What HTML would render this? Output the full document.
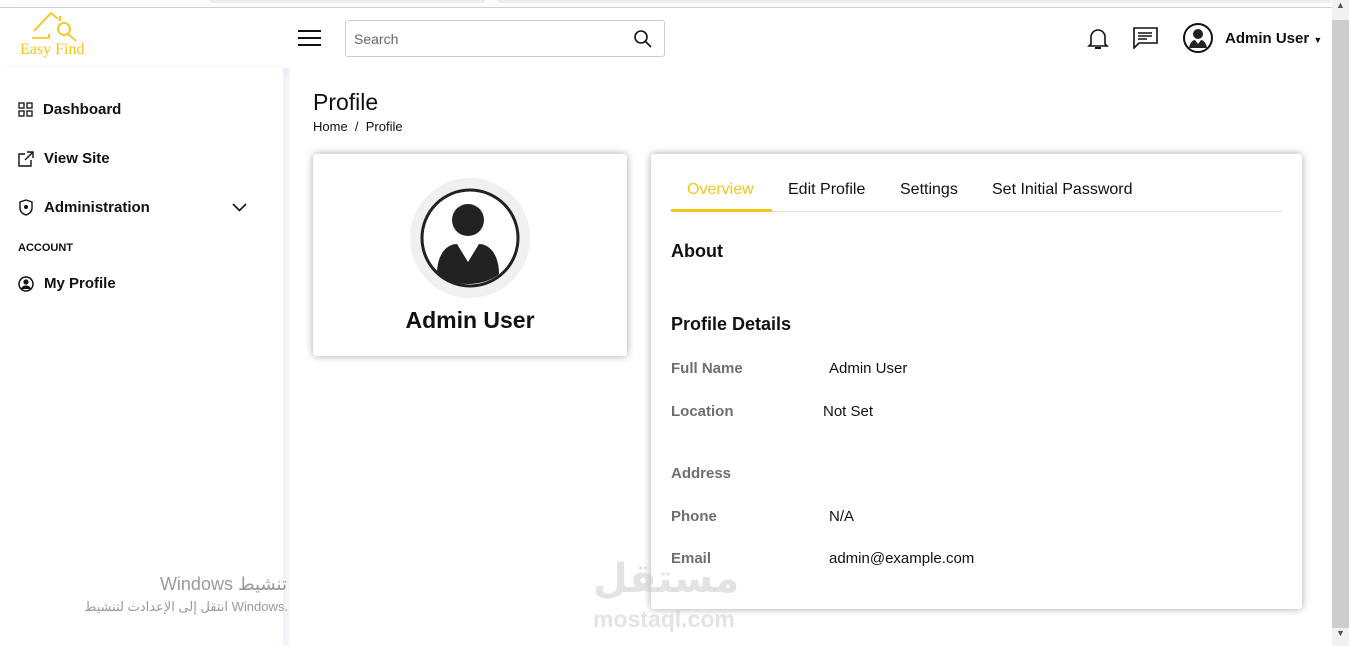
<!DOCTYPE html>
<html><head><meta charset="utf-8"><style>
*{box-sizing:border-box;margin:0;padding:0}
body{width:1349px;height:646px;overflow:hidden;background:#f6f9ff;font-family:"Liberation Sans","DejaVu Sans",sans-serif;color:#111;position:relative}
.top{position:absolute;left:0;top:0;width:1332px;height:8px;background:#fff;border-bottom:1px solid #d6d6d6}
.top i{position:absolute;top:0;height:3px;background:#eee;border-radius:0 0 4px 4px}
header{position:absolute;left:0;top:8px;width:1332px;height:60px;background:#fff;box-shadow:0 2px 12px rgba(0,0,0,.06)}
.side{position:absolute;left:0;top:68px;width:283px;height:578px;background:#fff;box-shadow:2px 0 8px rgba(0,0,0,.05)}
.main{position:absolute;left:290px;top:68px;width:1042px;height:578px;background:#fff}
.nav{position:absolute;left:18px;font-size:15px;font-weight:bold;color:#111;display:flex;align-items:center;gap:10px}
.card{position:absolute;background:#fff;box-shadow:0 0 8px rgba(0,0,0,.35);border-radius:3px}
.lbl{position:absolute;left:20px;font-size:15px;color:#555;font-weight:bold;opacity:.85}
.val{position:absolute;font-size:15px;color:#111}
.sb{position:absolute;right:0;top:0;width:17px;height:646px;background:#cdcdcd}
</style></head><body>
<div class="top"><i style="left:210px;width:275px"></i><i style="left:498px;width:834px"></i></div>
<header>
<svg style="position:absolute;left:18px;top:2px" width="72" height="40" viewBox="0 0 72 40"><g stroke="#f5c518" stroke-width="1.8" fill="none"><path d="M16 21 L33 3 L40 9"/><path d="M42 6 V11"/><path d="M31 24 V28 M31 28 H14"/><circle cx="46" cy="19" r="6"/><path d="M50 24 L58 31"/></g></svg>
<div style="position:absolute;left:20px;top:33px;font-family:'Liberation Serif',serif;font-size:16px;color:#f5c518">Easy Find</div>
<svg style="position:absolute;left:298px;top:21px" width="23" height="18"><path d="M0 2H23M0 9H23M0 16H23" stroke="#111" stroke-width="2"/></svg>
<div style="position:absolute;left:345px;top:12px;width:320px;height:37px;border:1px solid #ccc;border-radius:3px;font-size:14px;color:#666;padding:10px 8px">Search
<svg style="position:absolute;right:12px;top:9px" width="18" height="18"><circle cx="7" cy="7" r="6" stroke="#111" stroke-width="1.6" fill="none"/><path d="M11.5 11.5L17 17" stroke="#111" stroke-width="1.6"/></svg></div>
<svg style="position:absolute;left:1087px;top:19px" width="22" height="24" viewBox="0 0 22 24"><path d="M4 17V10a7 7 0 0 1 14 0v7l2 2H2z" fill="none" stroke="#111" stroke-width="1.6"/><path d="M8 21h6" stroke="#111" stroke-width="2"/></svg>
<svg style="position:absolute;left:1133px;top:19px" width="25" height="22" viewBox="0 0 25 22"><path d="M1 1h23v15H6l-5 5z" fill="none" stroke="#111" stroke-width="1.6"/><path d="M5 6h14M5 9h14M5 12h9" stroke="#111" stroke-width="1.4"/></svg>
<svg style="position:absolute;left:1182px;top:14px" width="32" height="32" viewBox="0 0 32 32"><circle cx="16" cy="16" r="14" fill="#fff" stroke="#111" stroke-width="2"/><circle cx="16" cy="12" r="5" fill="#222"/><path d="M7 26c1-6 4-8 6-8l3 4 3-4c2 0 5 2 6 8z" fill="#222"/></svg>
<div style="position:absolute;left:1225px;top:22px;font-size:15px;font-weight:bold">Admin User <span style="font-size:9px">▼</span></div>
</header>
<div class="side">
<div class="nav" style="top:33px"><svg width="15" height="15"><g fill="none" stroke="#111" stroke-width="1.3"><rect x="1" y="1" width="5" height="5"/><rect x="9" y="1" width="5" height="5"/><rect x="1" y="9" width="5" height="5"/><rect x="9" y="9" width="5" height="5"/></g></svg>Dashboard</div>
<div class="nav" style="top:82px"><svg width="16" height="16"><g fill="none" stroke="#111" stroke-width="1.4"><path d="M7 3H1v12h12V9"/><path d="M9 1h6v6M15 1L7 9"/></g></svg>View Site</div>
<div class="nav" style="top:131px"><svg width="16" height="17"><path d="M8 1l6 2v6c0 4-3 6-6 7-3-1-6-3-6-7V3z" fill="none" stroke="#111" stroke-width="1.4"/><circle cx="8" cy="8" r="2" fill="#111"/></svg>Administration</div>
<svg style="position:absolute;left:232px;top:135px" width="15" height="9"><path d="M1 1l6.5 6.5L14 1" fill="none" stroke="#111" stroke-width="1.6"/></svg>
<div style="position:absolute;left:18px;top:174px;font-size:11px;font-weight:bold">ACCOUNT</div>
<div class="nav" style="top:207px"><svg width="16" height="16"><circle cx="8" cy="8" r="7" fill="none" stroke="#111" stroke-width="1.5"/><circle cx="8" cy="6" r="2.6" fill="#111"/><path d="M3 13c1-3 3-3.5 5-3.5s4 .5 5 3.5" fill="#111"/></svg>My Profile</div>
<div style="position:absolute;right:-4px;top:506px;font-size:18px;color:#999;white-space:nowrap">Windows تنشيط</div>
<div style="position:absolute;right:-5px;top:531px;font-size:13px;color:#999;white-space:nowrap">انتقل إلى الإعدادت لتنشيط Windows.</div>
</div>
<div class="main">
<div style="position:absolute;left:23px;top:21px;font-size:23px">Profile</div>
<div style="position:absolute;left:23px;top:51px;font-size:13px">Home &nbsp;/&nbsp; Profile</div>
<div class="card" style="left:23px;top:86px;width:314px;height:202px">
<svg style="position:absolute;left:97px;top:24px" width="120" height="120" viewBox="0 0 120 120"><circle cx="60" cy="60" r="60" fill="#f0f0f0"/><circle cx="60" cy="60" r="48" fill="#fff" stroke="#222" stroke-width="3"/><circle cx="58" cy="42" r="16" fill="#222"/><path d="M27 96c0-20 10-30 20-30l11 18 11-18c10 0 20 10 20 30c-8 7-20 10-31 10s-23-3-31-10z" fill="#222"/></svg>
<div style="position:absolute;left:0;width:314px;top:153px;text-align:center;font-size:23px;font-weight:bold">Admin User</div>
</div>
<div class="card" style="left:361px;top:86px;width:651px;height:455px">
<div style="position:absolute;left:20px;top:57px;width:611px;height:1px;background:#ddd"></div>
<div style="position:absolute;left:20px;top:55px;width:101px;height:3px;background:#f5c518"></div>
<div style="position:absolute;left:36px;top:27px;font-size:16px;color:#f5c518">Overview</div>
<div style="position:absolute;left:137px;top:27px;font-size:16px">Edit Profile</div>
<div style="position:absolute;left:249px;top:27px;font-size:16px">Settings</div>
<div style="position:absolute;left:341px;top:27px;font-size:16px">Set Initial Password</div>
<div style="position:absolute;left:20px;top:87px;font-size:18px;font-weight:bold">About</div>
<div style="position:absolute;left:20px;top:160px;font-size:18px;font-weight:bold">Profile Details</div>
<div class="lbl" style="top:206px">Full Name</div><div class="val" style="left:178px;top:206px">Admin User</div>
<div class="lbl" style="top:249px">Location</div><div class="val" style="left:172px;top:249px">Not Set</div>
<div class="lbl" style="top:311px">Address</div>
<div class="lbl" style="top:354px">Phone</div><div class="val" style="left:178px;top:354px">N/A</div>
<div class="lbl" style="top:396px">Email</div><div class="val" style="left:178px;top:396px">admin@example.com</div>
</div>
<div style="position:absolute;left:303px;top:488px;font-size:40px;font-weight:bold;color:rgba(200,200,200,.5);font-family:'DejaVu Sans',sans-serif">مستقل</div>
<div style="position:absolute;left:303px;top:538px;font-size:23px;font-weight:bold;color:rgba(200,200,200,.5)">mostaql.com</div>
</div>
<div class="sb"><div style="position:absolute;top:0;width:17px;height:20px;background:#f1f1f1;font-size:9px;text-align:center;color:#555">▲</div><div style="position:absolute;bottom:0;width:17px;height:18px;background:#f1f1f1;font-size:9px;text-align:center;color:#555">▼</div></div>
</body></html>
